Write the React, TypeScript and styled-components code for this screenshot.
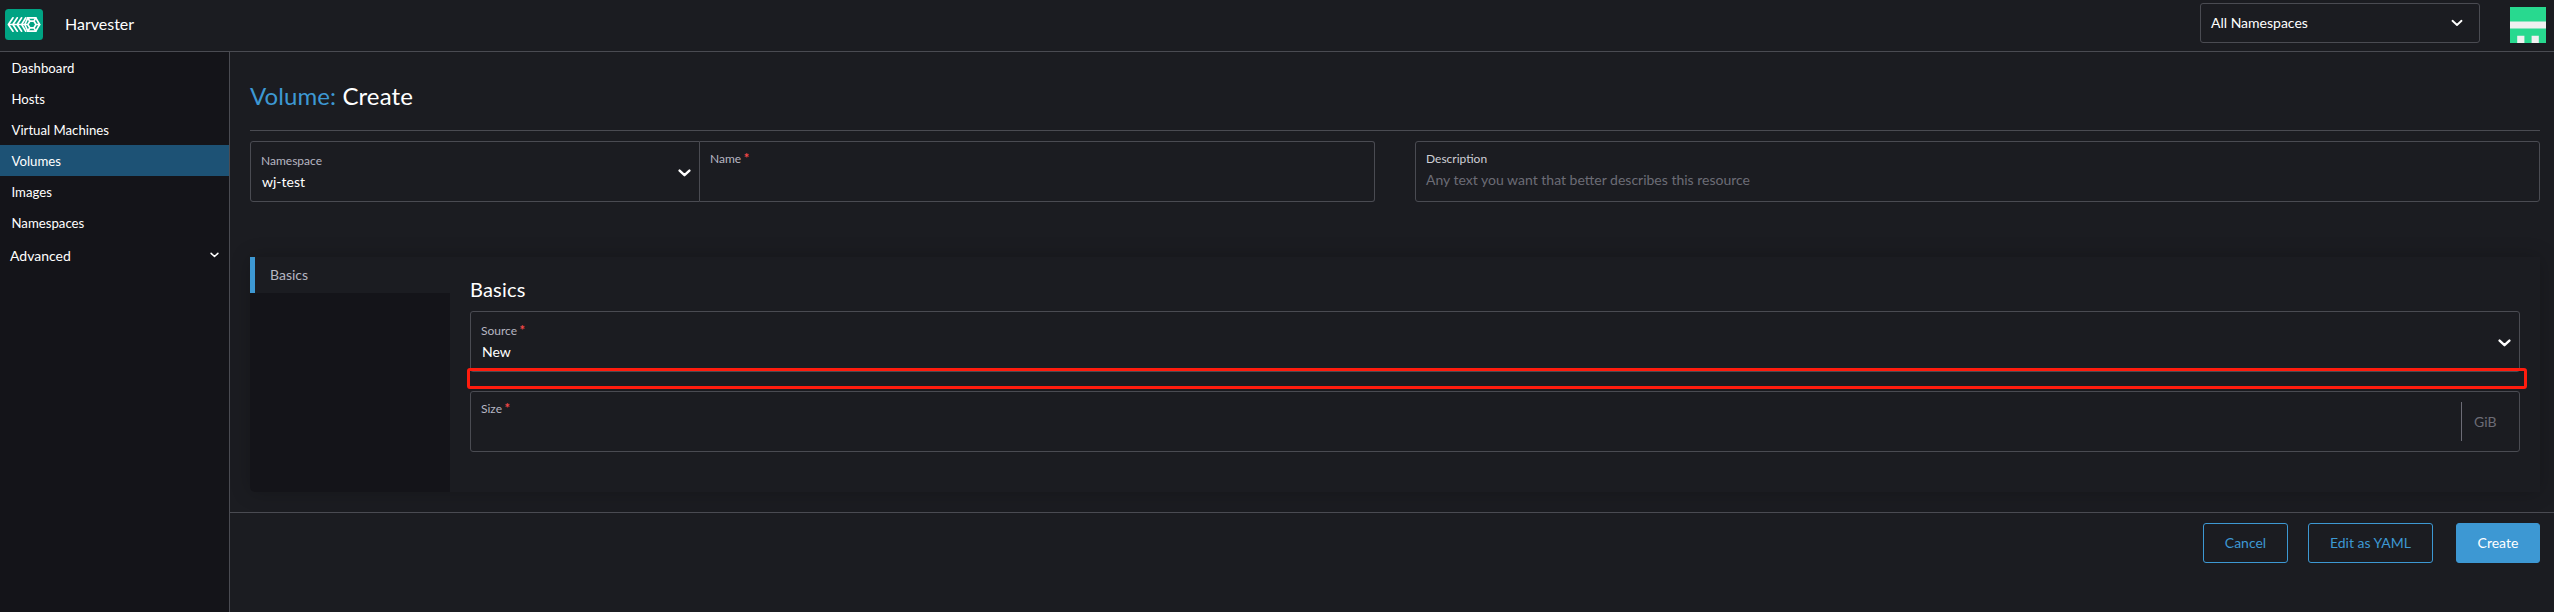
import React from "react";
import styled, { createGlobalStyle } from "styled-components";

const c = {
  body: "#1b1c21",
  nav: "#141419",
  border: "#4a4b52",
  primary: "#3d98d3",
  active: "#1d5275",
  label: "#b6b6c2",
  muted: "#6c6c76",
  error: "#f64747",
};

const GlobalStyle = createGlobalStyle`
  * { box-sizing: border-box; }
  body {
    margin: 0;
    background: ${c.body};
    color: #fff;
    font-family: Lato, "Open Sans", sans-serif;
    font-size: 14px;
    line-height: 17px;
    overflow: hidden;
  }
`;

const Page = styled.div`
  display: flex;
  flex-direction: column;
  height: 612px;
  white-space: nowrap;
`;

const Header = styled.header`
  display: flex;
  align-items: flex-start;
  height: 52px;
  flex: none;
  border-bottom: 1px solid ${c.border};
`;

const Logo = styled.svg`
  display: block;
  width: 38px;
  height: 31px;
  margin: 9px 0 0 5px;
`;

const Product = styled.div`
  flex: 1;
  margin: 14px 0 0 22px;
  font-size: 16px;
  line-height: 19px;
`;

const NamespaceFilter = styled.div`
  display: flex;
  align-items: center;
  justify-content: space-between;
  width: 280px;
  height: 40px;
  margin: 3px 30px 0 0;
  padding: 0 16px 1px 10px;
  border: 1px solid ${c.border};
  border-radius: 3px;
  svg { margin-top: 1px; }
`;

const Avatar = styled.svg`
  display: block;
  width: 36px;
  height: 36px;
  margin: 7px 8px 0 0;
`;

const Body = styled.div`
  display: flex;
  flex: 1;
`;

const Nav = styled.nav`
  width: 230px;
  flex: none;
  background: ${c.nav};
  border-right: 1px solid ${c.border};
`;

const NavItem = styled.div<{ $active?: boolean }>`
  height: 31px;
  padding: 8px 0 0 11.5px;
  font-size: 13.2px;
  line-height: 16px;
  background: ${(p) => (p.$active ? c.active : "transparent")};
`;

const NavGroup = styled.div`
  display: flex;
  align-items: center;
  justify-content: space-between;
  height: 33px;
  padding: 1px 10px 0 10px;
`;

const Main = styled.main`
  display: flex;
  flex-direction: column;
  flex: 1;
`;

const Content = styled.section`
  height: 460px;
  padding: 29px 14px 0 20px;
`;

const Title = styled.h1`
  margin: 0;
  height: 50px;
  border-bottom: 1px solid ${c.border};
  font-size: 24px;
  line-height: 29px;
  font-weight: 400;
  letter-spacing: 0.1px;
  span { color: ${c.primary}; }
`;

const FieldRow = styled.div`
  display: grid;
  grid-template-columns: 1fr 1fr;
  gap: 40px;
  margin-top: 10px;
`;

const Joined = styled.div`
  display: grid;
  grid-template-columns: 450px 1fr;
`;

const Field = styled.div<{ $join?: "left" | "right" }>`
  display: flex;
  align-items: center;
  justify-content: space-between;
  height: 61px;
  padding: 0 8px 0 10px;
  border: 1px solid ${c.border};
  border-radius: ${(p) => (p.$join === "left" ? "3px 0 0 3px" : p.$join === "right" ? "0 3px 3px 0" : "3px")};
  border-left-width: ${(p) => (p.$join === "right" ? 0 : 1)}px;
  > svg { margin-top: 3px; }
`;

const FieldText = styled.div<{ $top?: number }>`
  align-self: flex-start;
  padding-top: ${(p) => p.$top ?? 9}px;
`;

const Label = styled.div<{ $bright?: boolean }>`
  height: 15px;
  font-size: 12px;
  line-height: 15px;
  color: ${(p) => (p.$bright ? "#cfcfd6" : c.label)};
  span {
    margin-left: 2.5px;
    color: ${c.error};
    font-size: 13px;
    font-weight: 700;
    line-height: 0;
  }
`;

const Value = styled.div`
  margin: 5px 0 0 1px;
`;

const Placeholder = styled.div`
  margin-top: 5px;
  color: ${c.muted};
`;

const Tabbed = styled.div`
  display: flex;
  height: 235px;
  margin-top: 55px;
  border-radius: 5px;
  box-shadow: 0 0 20px rgba(0, 0, 0, 0.22);
`;

const TabList = styled.div`
  width: 200px;
  background: ${c.nav};
  border-radius: 0 0 0 5px;
`;

const Tab = styled.div`
  height: 36px;
  padding: 9px 0 0 15px;
  background: ${c.body};
  border-left: 5px solid ${c.primary};
  color: ${c.label};
`;

const Panel = styled.div`
  position: relative;
  flex: 1;
  padding: 20px;
  background: ${c.body};
`;

const PanelTitle = styled.h3`
  margin: 0 0 10px;
  font-size: 20px;
  line-height: 24px;
  font-weight: 400;
  letter-spacing: 0.2px;
`;

const SizeWrap = styled.div`
  margin-top: 19px;
`;

const Unit = styled.div`
  width: 50px;
  height: 39px;
  border-left: 1px solid ${c.muted};
  padding: 11px 0 0 12px;
  color: ${c.muted};
`;

const Highlight = styled.div`
  position: absolute;
  left: 17px;
  right: 13px;
  top: 111px;
  height: 21px;
  border: 3px solid #ff1c0e;
  border-radius: 3px;
`;

const Footer = styled.footer`
  display: flex;
  justify-content: flex-end;
  flex: 1;
  padding: 10px 14px 0 0;
  border-top: 1px solid ${c.border};
`;

const Button = styled.button<{ $w: number; $primary?: boolean }>`
  width: ${(p) => p.$w}px;
  height: 40px;
  margin-left: ${(p) => (p.$primary ? 23 : 20)}px;
  padding: 0 0 1px;
  border: 1px solid ${c.primary};
  border-radius: 3px;
  background: ${(p) => (p.$primary ? c.primary : "transparent")};
  color: ${(p) => (p.$primary ? "#fff" : c.primary)};
  font: 14px/17px Lato, sans-serif;
`;

const Chevron = ({ w = 13, h = 8, s = 2.4 }: { w?: number; h?: number; s?: number }) => (
  <svg width={w} height={h} viewBox="0 0 13 8" fill="none" stroke="#fff" strokeWidth={s} strokeLinecap="round" strokeLinejoin="round">
    <path d="M1.6 1.6 6.5 6.2 11.4 1.6" />
  </svg>
);

const HarvesterLogo = () => (
  <Logo viewBox="0 0 38 31">
    <rect width="38" height="31" rx="3.5" fill="#00a383" />
    <g fill="none" stroke="#fff" strokeWidth="1.7" strokeLinejoin="round" strokeLinecap="round">
      <path d="M4 15.5H22M8 8.8 3.4 15.5 8 22.2M12.3 8.8 7.8 15.5 12.3 22.2M16.6 8.8 12.2 15.5 16.6 22.2M20.8 8.8 16.6 15.5 20.8 22.2" />
      <path d="M22.8 8.8H30.8L34.6 15.5 30.8 22.2H22.8L19.8 15.5Z" />
      <path d="M24.8 12.2H29L31 15.5 29 18.8H24.8L22.8 15.5ZM24.8 12.2 22.8 8.8M29 12.2 30.8 8.8M31 15.5H34.6M29 18.8 30.8 22.2M24.8 18.8 22.8 22.2" />
    </g>
  </Logo>
);

export default function App() {
  return (
    <Page>
      <GlobalStyle />
      <Header>
        <HarvesterLogo />
        <Product>Harvester</Product>
        <NamespaceFilter>
          All Namespaces
          <Chevron w={12} h={8} s={2} />
        </NamespaceFilter>
        <Avatar viewBox="0 0 5 5">
          <path fill="#28d98f" d="M0 0H5V5H0Z" />
          <path fill="#f0f0f0" d="M0 2H5V3H0ZM1 4H2V5H1ZM3 4H4V5H3Z" />
        </Avatar>
      </Header>
      <Body>
        <Nav>
          {["Dashboard", "Hosts", "Virtual Machines", "Volumes", "Images", "Namespaces"].map((n) => (
            <NavItem key={n} $active={n === "Volumes"}>{n}</NavItem>
          ))}
          <NavGroup>
            Advanced
            <Chevron w={9} h={6} s={2.2} />
          </NavGroup>
        </Nav>
        <Main>
          <Content>
            <Title><span>Volume:</span> Create</Title>
            <FieldRow>
              <Joined>
                <Field $join="left">
                  <FieldText $top={11}>
                    <Label>Namespace</Label>
                    <Value>wj-test</Value>
                  </FieldText>
                  <Chevron />
                </Field>
                <Field $join="right">
                  <FieldText><Label>Name<span>*</span></Label></FieldText>
                </Field>
              </Joined>
              <Field>
                <FieldText>
                  <Label $bright>Description</Label>
                  <Placeholder>Any text you want that better describes this resource</Placeholder>
                </FieldText>
              </Field>
            </FieldRow>
            <Tabbed>
              <TabList><Tab>Basics</Tab></TabList>
              <Panel>
                <PanelTitle>Basics</PanelTitle>
                <Field>
                  <FieldText $top={11}>
                    <Label>Source<span>*</span></Label>
                    <Value>New</Value>
                  </FieldText>
                  <Chevron />
                </Field>
                <SizeWrap>
                  <Field>
                    <FieldText><Label>Size<span>*</span></Label></FieldText>
                    <Unit>GiB</Unit>
                  </Field>
                </SizeWrap>
                <Highlight />
              </Panel>
            </Tabbed>
          </Content>
          <Footer>
            <Button $w={85}>Cancel</Button>
            <Button $w={125}>Edit as YAML</Button>
            <Button $w={84} $primary>Create</Button>
          </Footer>
        </Main>
      </Body>
    </Page>
  );
}
